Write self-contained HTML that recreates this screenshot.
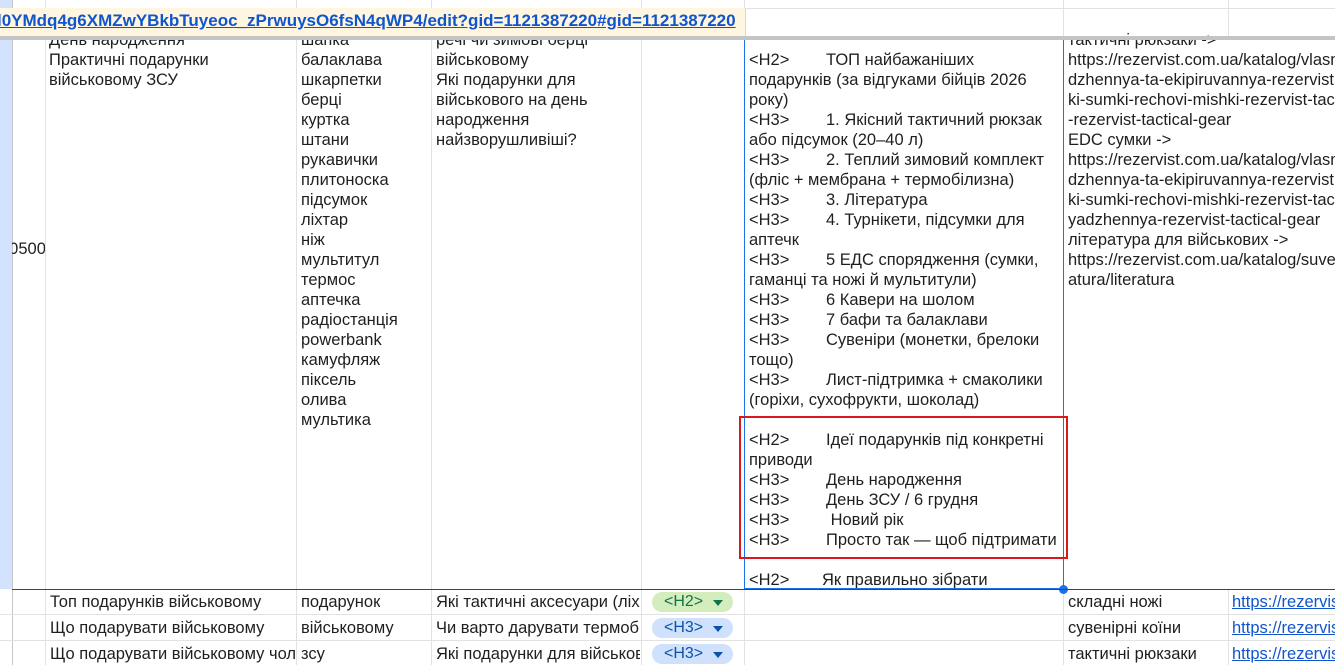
<!DOCTYPE html>
<html><head><meta charset="utf-8"><style>
body{margin:0;width:1335px;height:665px;overflow:hidden;background:#fff;font-family:"Liberation Sans",Arial,sans-serif;font-size:16.5px;color:#1f1f1f;position:relative}
.a{position:absolute}
.vl{position:absolute;width:1px;background:#e2e2e2}
.hl{position:absolute;height:1px;background:#e2e2e2}
.col{position:absolute;line-height:20px;white-space:nowrap;overflow:hidden}
.t{display:inline-block;width:77px}
.cell{position:absolute;line-height:26px;white-space:nowrap;overflow:hidden}
.chip{position:absolute;height:20px;border-radius:10px;font-size:16px;line-height:20px;padding-left:12px;box-sizing:border-box}
.chip:after{content:"";position:absolute;right:10px;top:8px;border-left:5px solid transparent;border-right:5px solid transparent;border-top:6px solid currentColor}
a{color:#1155cc;text-decoration:underline}
</style></head><body>
<div class="vl" style="left:12px;top:0;height:665px;background:#c7c7c7"></div>
<div class="vl" style="left:45px;top:0;height:665px"></div>
<div class="vl" style="left:296px;top:0;height:665px"></div>
<div class="vl" style="left:431px;top:0;height:665px"></div>
<div class="vl" style="left:641px;top:0;height:665px"></div>
<div class="vl" style="left:744px;top:0;height:665px"></div>
<div class="vl" style="left:1063px;top:0;height:665px"></div>
<div class="vl" style="left:1228px;top:0;height:40px"></div>
<div class="vl" style="left:1228px;top:589px;height:76px"></div>
<div class="hl" style="left:0;top:8px;width:1335px"></div>

<div class="col" style="left:49px;top:30px;width:245px;height:559px">День народження<br>Практичні подарунки<br>військовому ЗСУ</div>
<div class="col" style="left:301px;top:30px;width:128px;height:559px">шапка<br>балаклава<br>шкарпетки<br>берці<br>куртка<br>штани<br>рукавички<br>плитоноска<br>підсумок<br>ліхтар<br>ніж<br>мультитул<br>термос<br>аптечка<br>радіостанція<br>powerbank<br>камуфляж<br>піксель<br>олива<br>мультика</div>
<div class="col" style="left:436px;top:30px;width:204px;height:559px">речі чи зимові берці<br>військовому<br>Які подарунки для<br>військового на день<br>народження<br>найзворушливіші?</div>
<div class="col" style="left:749px;top:30px;width:313px;height:559px"><br><span class="t">&lt;H2&gt;</span>ТОП найбажаніших<br>подарунків (за відгуками бійців 2026<br>року)<br><span class="t">&lt;H3&gt;</span>1. Якісний тактичний рюкзак<br>або підсумок (20–40 л)<br><span class="t">&lt;H3&gt;</span>2. Теплий зимовий комплект<br>(фліс + мембрана + термобілизна)<br><span class="t">&lt;H3&gt;</span>3. Література<br><span class="t">&lt;H3&gt;</span>4. Турнікети, підсумки для<br>аптечк<br><span class="t">&lt;H3&gt;</span>5 ЕДС спорядження (сумки,<br>гаманці та ножі й мультитули)<br><span class="t">&lt;H3&gt;</span>6 Кавери на шолом<br><span class="t">&lt;H3&gt;</span>7 бафи та балаклави<br><span class="t">&lt;H3&gt;</span>Сувеніри (монетки, брелоки<br>тощо)<br><span class="t">&lt;H3&gt;</span>Лист-підтримка + смаколики<br>(горіхи, сухофрукти, шоколад)<br><br><span class="t">&lt;H2&gt;</span>Ідеї подарунків під конкретні<br>приводи<br><span class="t">&lt;H3&gt;</span>День народження<br><span class="t">&lt;H3&gt;</span>День ЗСУ / 6 грудня<br><span class="t">&lt;H3&gt;</span> Новий рік<br><span class="t">&lt;H3&gt;</span>Просто так — щоб підтримати<br><br><span class="t" style="width:73px">&lt;H2&gt;</span>Як правильно зібрати</div>
<div class="col" style="left:1068px;top:30px;width:267px;height:559px">тактичні рюкзаки -&gt;<br>https://rezervist.com.ua/katalog/vlasne-<br>dzhennya-ta-ekipiruvannya-rezervist<br>ki-sumki-rechovi-mishki-rezervist-tactical<br>-rezervist-tactical-gear<br>EDC сумки -&gt;<br>https://rezervist.com.ua/katalog/vlasne-<br>dzhennya-ta-ekipiruvannya-rezervist<br>ki-sumki-rechovi-mishki-rezervist-tac<br>yadzhennya-rezervist-tactical-gear<br>література для військових -&gt;<br>https://rezervist.com.ua/katalog/suvenir<br>atura/literatura</div>
<div class="col" style="left:0;top:239px;width:45px;text-align:right;padding-right:3px;box-sizing:border-box">00500</div>
<div class="a" style="left:0;top:0;width:12px;height:589px;background:#d3e3fd"></div>

<div class="a" style="left:0;top:8px;width:745px;height:28px;background:#fef6e0;border-right:1px solid #e8d9a8"></div>
<div class="a" style="left:0;top:11px;font-size:17px;font-weight:bold;line-height:20px;white-space:nowrap"><a style="margin-left:-3px">l0YMdq4g6XMZwYBkbTuyeoc_zPrwuysO6fsN4qWP4/edit?gid=1121387220#gid=1121387220</a></div>
<div class="a" style="left:0;top:36px;width:1335px;height:4px;background:#c4c4c4"></div>

<div class="a" style="left:744px;top:40px;width:318px;height:548px;border:1px solid #1a73e8;border-top:none"></div>
<div class="a" style="left:1059px;top:585px;width:9px;height:9px;border-radius:50%;background:#1a73e8"></div>
<div class="a" style="left:739px;top:416px;width:325px;height:139px;border:2px solid #d9191c"></div>

<div class="hl" style="left:12px;top:589px;width:1323px;background:#444"></div>
<div class="hl" style="left:0;top:614px;width:1335px"></div>
<div class="hl" style="left:0;top:640px;width:1335px"></div>

<div class="cell" style="left:50px;top:589px;width:245px">Топ подарунків військовому</div>
<div class="cell" style="left:50px;top:615px;width:245px">Що подарувати військовому</div>
<div class="cell" style="left:50px;top:641px;width:245px">Що подарувати військовому чол</div>
<div class="cell" style="left:301px;top:589px">подарунок</div>
<div class="cell" style="left:301px;top:615px">військовому</div>
<div class="cell" style="left:301px;top:641px">зсу</div>
<div class="cell" style="left:436px;top:589px;width:204px">Які тактичні аксесуари (ліх</div>
<div class="cell" style="left:436px;top:615px;width:204px">Чи варто дарувати термоб</div>
<div class="cell" style="left:436px;top:641px;width:204px">Які подарунки для військов</div>
<div class="chip" style="left:652px;top:592px;width:81px;background:#d4edbc;color:#11734b">&lt;H2&gt;</div>
<div class="chip" style="left:652px;top:618px;width:81px;background:#cfe1fd;color:#0a53a8">&lt;H3&gt;</div>
<div class="chip" style="left:652px;top:644px;width:81px;background:#cfe1fd;color:#0a53a8">&lt;H3&gt;</div>
<div class="cell" style="left:1068px;top:589px">складні ножі</div>
<div class="cell" style="left:1068px;top:615px">сувенірні коїни</div>
<div class="cell" style="left:1068px;top:641px">тактичні рюкзаки</div>
<div class="cell" style="left:1232px;top:589px;width:103px"><a>https://rezervist</a></div>
<div class="cell" style="left:1232px;top:615px;width:103px"><a>https://rezervist</a></div>
<div class="cell" style="left:1232px;top:641px;width:103px"><a>https://rezervist</a></div>
</body></html>
